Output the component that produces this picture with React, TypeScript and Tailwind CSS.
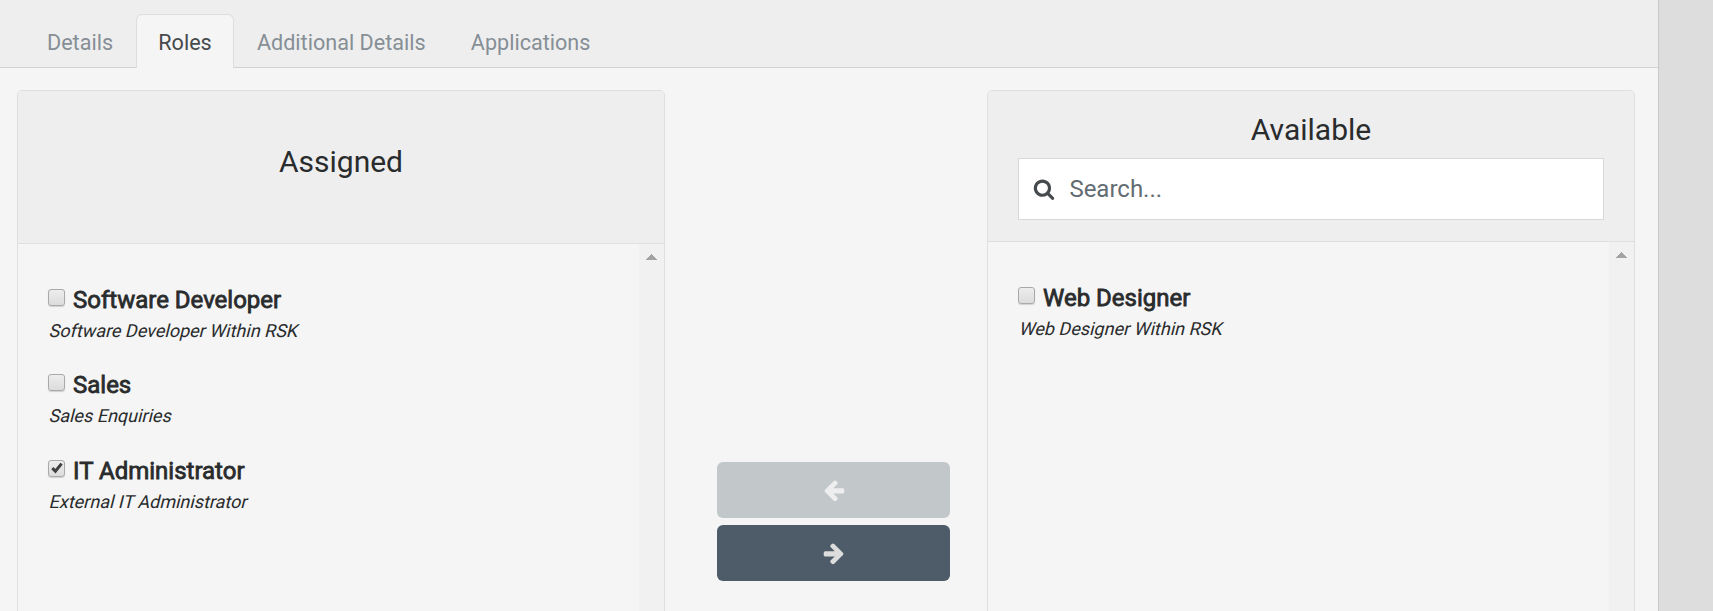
import type { ReactNode } from "react";

type Role = { name: string; description: string; checked?: boolean };

const tabs = ["Details", "Roles", "Additional Details", "Applications"];

const assigned: Role[] = [
  { name: "Software Developer", description: "Software Developer Within RSK" },
  { name: "Sales", description: "Sales Enquiries" },
  { name: "IT Administrator", description: "External IT Administrator", checked: true },
];

const available: Role[] = [{ name: "Web Designer", description: "Web Designer Within RSK" }];

const icons = {
  left: "M1664 896v128q0 53-32.5 90.5t-84.5 37.5h-704l293 294q38 36 38 90t-38 90l-75 76q-37 37-90 37-52 0-91-37l-651-652q-37-37-37-90 0-52 37-91l651-650q38-38 91-38 52 0 90 38l75 74q38 38 38 91t-38 91l-293 293h704q52 0 84.5 37.5t32.5 90.5z",
  right:
    "M1600 960q0 54-37 91l-651 651q-39 37-91 37-51 0-90-37l-75-75q-38-38-38-91t38-91l293-293h-704q-52 0-84.5-37.5t-32.5-90.5v-128q0-53 32.5-90.5t84.5-37.5h704l-293-294q-38-36-38-90t38-90l75-75q38-38 90-38 53 0 91 38l651 651q37 35 37 90z",
  search:
    "M1216 832q0-185-131.5-316.5t-316.5-131.5-316.5 131.5-131.5 316.5 131.5 316.5 316.5 131.5 316.5-131.5 131.5-316.5zm512 832q0 52-38 90t-90 38q-54 0-90-38l-343-342q-179 124-399 124-143 0-273.5-55.5t-225-150-150-225-55.5-273.5 55.5-273.5 150-225 225-150 273.5-55.5 273.5 55.5 225 150 150 225 55.5 273.5q0 220-124 399l343 343q37 37 37 90z",
};

function Icon({ name, className }: { name: keyof typeof icons; className: string }) {
  return (
    <svg viewBox="0 0 1792 1792" fill="currentColor" className={className}>
      <path d={icons[name]} />
    </svg>
  );
}

function Checkbox({ checked }: { checked?: boolean }) {
  return (
    <span className="grid size-[17px] shrink-0 place-items-center rounded-[3px] border border-[#a9a9a9] bg-gradient-to-b from-[#ededed] to-[#dcdcdc] shadow-[0_1px_1px_rgba(0,0,0,0.15)]">
      {checked && (
        <svg viewBox="0 0 12 12" className="size-3" fill="none" stroke="#404040" strokeWidth="3">
          <path d="M1.3 6.2 4.4 9.2 10.6 1.6" />
        </svg>
      )}
    </span>
  );
}

function RoleItem({ role }: { role: Role }) {
  return (
    <li className="flex h-[85.5px] flex-col items-start">
      <label className="flex h-[31px] gap-2">
        <Checkbox checked={role.checked} />
        <span className="-mt-[5px] text-2xl leading-8 whitespace-nowrap [-webkit-text-stroke:0.8px_#292b2c]">
          {role.name}
        </span>
      </label>
      <span className="ml-[1.5px] -skew-x-[14deg] text-[18px] leading-[22px] whitespace-nowrap">
        {role.description}
      </span>
    </li>
  );
}

function Panel({ header, roles }: { header: ReactNode; roles: Role[] }) {
  return (
    <section className="flex h-[560px] w-[648px] shrink-0 flex-col overflow-hidden rounded-t-[5px] border border-[#dfdfdf]">
      {header}
      <div className="flex flex-1 justify-between">
        <ul className="pt-[44.8px] pl-[30px]">
          {roles.map((role) => (
            <RoleItem key={role.name} role={role} />
          ))}
        </ul>
        <div className="flex w-[25px] justify-center bg-[#f1f1f1] pt-[10px]">
          <svg width="11" height="6" viewBox="0 0 11 6" fill="#a3a3a3" shapeRendering="crispEdges">
            <path d="M5.5 0 11 5.2V6H0V5.2Z" />
          </svg>
        </div>
      </div>
    </section>
  );
}

export default function App() {
  return (
    <div className="flex h-[611px] overflow-hidden bg-[#dddddd] font-[Roboto,sans-serif] text-[#292b2c]">
      <main className="flex w-[1659px] shrink-0 flex-col border-r border-[#c8c8c8] bg-[#f5f5f5]">
        <nav className="flex h-[68px] shrink-0 items-end border-b border-[#cfd2d3] bg-[#eeeeee] pl-[24.4px]">
          {tabs.map((tab) => (
            <a
              key={tab}
              className={
                tab === "Roles"
                  ? "-mb-px h-[54px] rounded-t-[6px] border border-b-0 border-[#dddddd] bg-[#f5f5f5] px-[21.6px] pt-[11px] text-[21.6px] leading-[34px] text-[#464a4c]"
                  : "-mb-px h-[54px] border border-b-0 border-transparent px-[21.6px] pt-[11px] text-[21.6px] leading-[34px] text-[#868e96]"
              }
            >
              {tab}
            </a>
          ))}
        </nav>
        <div className="flex pt-[22px] pl-[17px]">
          <Panel
            roles={assigned}
            header={
              <header className="flex h-[153px] items-center justify-center border-b border-[#dfdfdf] bg-[#eeeeee]">
                <h2 className="pb-[10px] text-[30px] leading-9">Assigned</h2>
              </header>
            }
          />
          <div className="flex w-[322px] shrink-0 flex-col gap-[7px] pt-[372px] pl-[52px]">
            <button className="flex h-14 w-[233px] items-center justify-center rounded-[6px] bg-[#c2c7ca] text-[#eeeeee]">
              <Icon name="left" className="size-6" />
            </button>
            <button className="flex h-14 w-[233px] items-center justify-center rounded-[6px] bg-[#4d5c68] text-[#dddddd]">
              <Icon name="right" className="size-6" />
            </button>
          </div>
          <Panel
            roles={available}
            header={
              <header className="flex h-[151px] flex-col items-center border-b border-[#dfdfdf] bg-[#eeeeee] pt-[21px]">
                <h2 className="text-[30px] leading-9">Available</h2>
                <div className="mt-[10px] flex h-[62px] w-[586px] items-center border border-[#d8d8d8] bg-white pl-[14px]">
                  <Icon name="search" className="size-[22px] text-[#464a4c]" />
                  <span className="ml-[14.4px] text-2xl text-[#636c72]">Search...</span>
                </div>
              </header>
            }
          />
        </div>
      </main>
    </div>
  );
}
